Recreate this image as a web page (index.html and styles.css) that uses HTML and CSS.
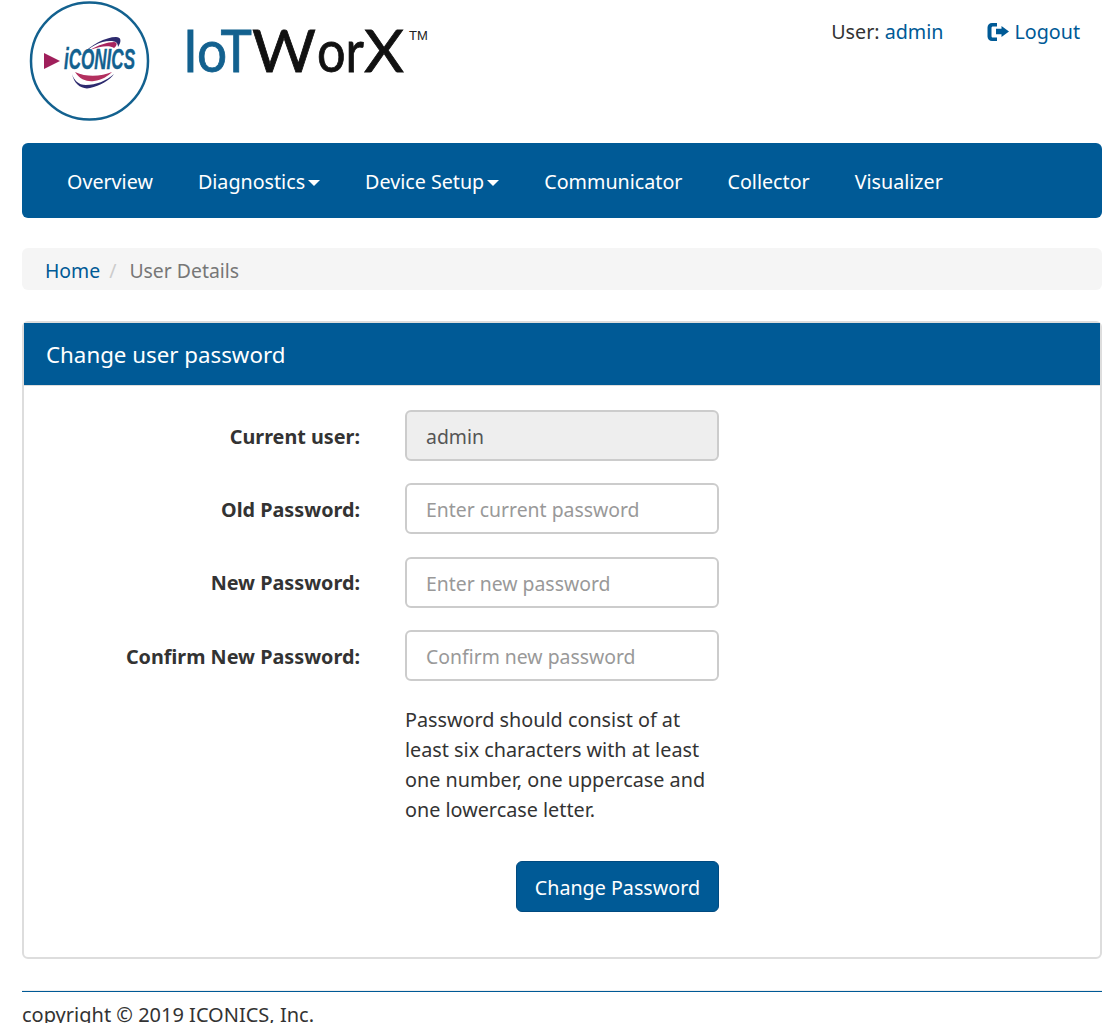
FILE: index.html
```html
<!doctype html>
<html lang="en">
  <head>
    <meta charset="UTF-8" />
    <title>IoTWorX - User Details</title>
    <link rel="stylesheet" href="styles.css">
  </head>
  <body>
    <div class="page">
      <!-- Logo and user links -->
      <header class="top">
        <svg class="logo" width="420" height="143" viewBox="0 0 420 143">
          <circle cx="67.500" cy="61" r="58.500" fill="#fff" stroke="#13618f" stroke-width="2.500" />
          <path d="M60 55 C68 45 84 37 94 37 C99 37 100 41 96 47 C96 43 94 41 88 41 C78 41 68 47 60 55 Z" fill="#2d2a6e" />
          <path d="M68 50 C76 45 86 42 92 42 C96 42 95 46 92 48 C88 45 78 46 68 50 Z" fill="#a8245f" />
          <path d="M50 74 C52 84 60 90 68 88 C78 86 88 80 92 74 C84 81 74 85 64 85 C56 85 52 80 50 74 Z" fill="#2d2a6e" />
          <path d="M53 72 C58 80 66 82 72 81 C80 80 86 76 90 72 C80 76 66 78 53 72 Z" fill="#b3305f" />
          <polygon points="22,53 38,61 22,69" fill="#a01f5b" />
          <text class="logo-iconics" x="42" y="69" textLength="71" lengthAdjust="spacingAndGlyphs">iCONICS</text>
          <text class="logo-name" y="72">
            <tspan x="161" class="logo-blue" textLength="69" lengthAdjust="spacingAndGlyphs">IoT</tspan><tspan x="230" textLength="64" lengthAdjust="spacingAndGlyphs">W</tspan><tspan x="295" textLength="47" lengthAdjust="spacingAndGlyphs">or</tspan><tspan x="342" textLength="40" lengthAdjust="spacingAndGlyphs">X</tspan>
          </text>
          <text class="logo-tm" x="387" y="40">TM</text>
        </svg>
        <div class="user-links">
          <span>User: <a href="#">admin</a></span>
          <a href="#" class="logout">
            <svg width="23" height="20" viewBox="0 0 23 20">
              <path d="M10 1 H5 C2.500 1 0.500 3 0.500 5.500 V14.500 C0.500 17 2.500 19 5 19 H10 V15.500 H6 C5 15.500 4.500 15 4.500 14 V6 C4.500 5 5 4.500 6 4.500 H10 Z" fill="#005a96" />
              <path d="M14.500 4 L22 9.500 L14.500 15 V12.200 H9 V6.800 H14.500 Z" fill="#005a96" />
            </svg>
            Logout
          </a>
        </div>
      </header>

      <!-- Main menu -->
      <nav class="menu">
        <a href="#">Overview</a>
        <a href="#">Diagnostics<span class="caret"></span></a>
        <a href="#">Device Setup<span class="caret"></span></a>
        <a href="#">Communicator</a>
        <a href="#">Collector</a>
        <a href="#">Visualizer</a>
      </nav>

      <div class="breadcrumb">
        <a href="#">Home</a>
        <span class="sep">/</span>
        <span class="current">User Details</span>
      </div>

      <!-- Password panel -->
      <section class="panel">
        <h3 class="panel-heading">Change user password</h3>
        <form class="panel-body">
          <div class="row">
            <label for="user">Current user:</label>
            <input type="text" id="user" value="admin" disabled />
          </div>
          <div class="row">
            <label for="old">Old Password:</label>
            <input type="password" id="old" placeholder="Enter current password" />
          </div>
          <div class="row">
            <label for="new">New Password:</label>
            <input type="password" id="new" placeholder="Enter new password" />
          </div>
          <div class="row">
            <label for="confirm">Confirm New Password:</label>
            <input type="password" id="confirm" placeholder="Confirm new password" />
          </div>
          <p class="help">
            Password should consist of at least six characters with at least
            one number, one uppercase and one lowercase letter.
          </p>
          <div class="actions">
            <button type="button">Change Password</button>
          </div>
        </form>
      </section>

      <footer class="footer">copyright © 2019 ICONICS, Inc.</footer>
    </div>
  </body>
</html>
```

FILE: styles.css
```css
/* Everything is sized for the 1116 wide window */
html,
body {
  height: 1023px;
  overflow: hidden;
}

body {
  font-family: "Noto Sans", "Open Sans", sans-serif;
  font-size: 19.700px;
  line-height: 30px;
  color: #333;
  background-color: #fff;
  margin: 0;
}

a {
  color: #005a96;
  text-decoration: none;
}

.page {
  width: 1080px;
  margin-left: 22px;
}

.top {
  display: flex;
  justify-content: space-between;
  height: 143px;
}

.logo {
  display: block;
}

.logo-iconics {
  font-family: "Liberation Sans", sans-serif;
  font-size: 29px;
  font-weight: bold;
  font-style: italic;
  fill: #13618f;
  stroke: #13618f;
  stroke-width: 0.400px;
}

.logo-name {
  font-family: Lato, sans-serif;
  font-size: 58px;
  fill: #111;
  stroke: #111;
  stroke-width: 0.800px;
}

.logo-blue {
  fill: #13618f;
  stroke: #13618f;
}

.logo-tm {
  font-family: "Liberation Sans", sans-serif;
  font-size: 13px;
  fill: #222;
}

.user-links {
  display: flex;
  gap: 44px;
  padding: 17px 22px 0 0;
}

.logout {
  display: flex;
  align-items: center;
  gap: 4px;
  height: 30px;
}

.menu {
  display: flex;
  gap: 45px;
  align-items: center;
  height: 75px;
  padding: 2px 0 0 45px;
  box-sizing: border-box;
  background-color: #005a96;
  border-radius: 6px;
}

.menu a {
  color: #fff;
}

.caret {
  display: inline-block;
  margin-left: 3px;
  vertical-align: middle;
  border-top: 6px solid #fff;
  border-left: 6px solid transparent;
  border-right: 6px solid transparent;
}

.breadcrumb {
  display: flex;
  height: 42px;
  box-sizing: border-box;
  align-items: center;
  margin-top: 30px;
  padding: 4px 0 0 23px;
  font-size: 19.400px;
  background-color: #f5f5f5;
  border-radius: 6px;
}

.breadcrumb .sep {
  color: #ccc;
  margin: 0 13px 0 9px;
}

.breadcrumb .current {
  color: #777;
}

.panel {
  height: 638px;
  margin-top: 31px;
  box-sizing: border-box;
  border: 2px solid #ddd;
  border-radius: 6px;
}

.panel-heading {
  height: 62px;
  margin: 0;
  padding-left: 22px;
  font-size: 22.300px;
  font-weight: normal;
  line-height: 64px;
  color: #fff;
  background-color: #005a96;
  border-bottom: 1px solid #ddd;
}

.panel-body {
  padding-top: 24px;
}

.row {
  display: flex;
  align-items: center;
  height: 51px;
  margin-bottom: 22.400px;
}

label {
  width: 336px;
  margin-right: 45px;
  padding-top: 2px;
  text-align: right;
  font-size: 19.800px;
  font-weight: bold;
}

input {
  width: 314px;
  height: 51px;
  box-sizing: border-box;
  padding: 2px 19px 0;
  font: inherit;
  font-size: 19.400px;
  color: #555;
  background-color: #fff;
  border: 2px solid #ccc;
  border-radius: 6px;
}

input:disabled {
  background-color: #eee;
}

input::placeholder {
  color: #999;
}

.help {
  width: 314px;
  margin: 0 0 0 381px;
  padding-top: 1px;
  font-size: 19.800px;
}

.actions {
  width: 314px;
  margin: 36px 0 0 381px;
  display: flex;
  justify-content: flex-end;
}

button {
  height: 51px;
  padding: 3px 18px 0;
  font: inherit;
  color: #fff;
  background-color: #005a96;
  border: 1px solid #004a80;
  border-radius: 6px;
}

.footer {
  margin-top: 32px;
  padding-top: 8px;
  font-size: 20px;
  border-top: 1px solid #005a96;
  box-shadow: 0 -1px 0 #eee;
}
```
